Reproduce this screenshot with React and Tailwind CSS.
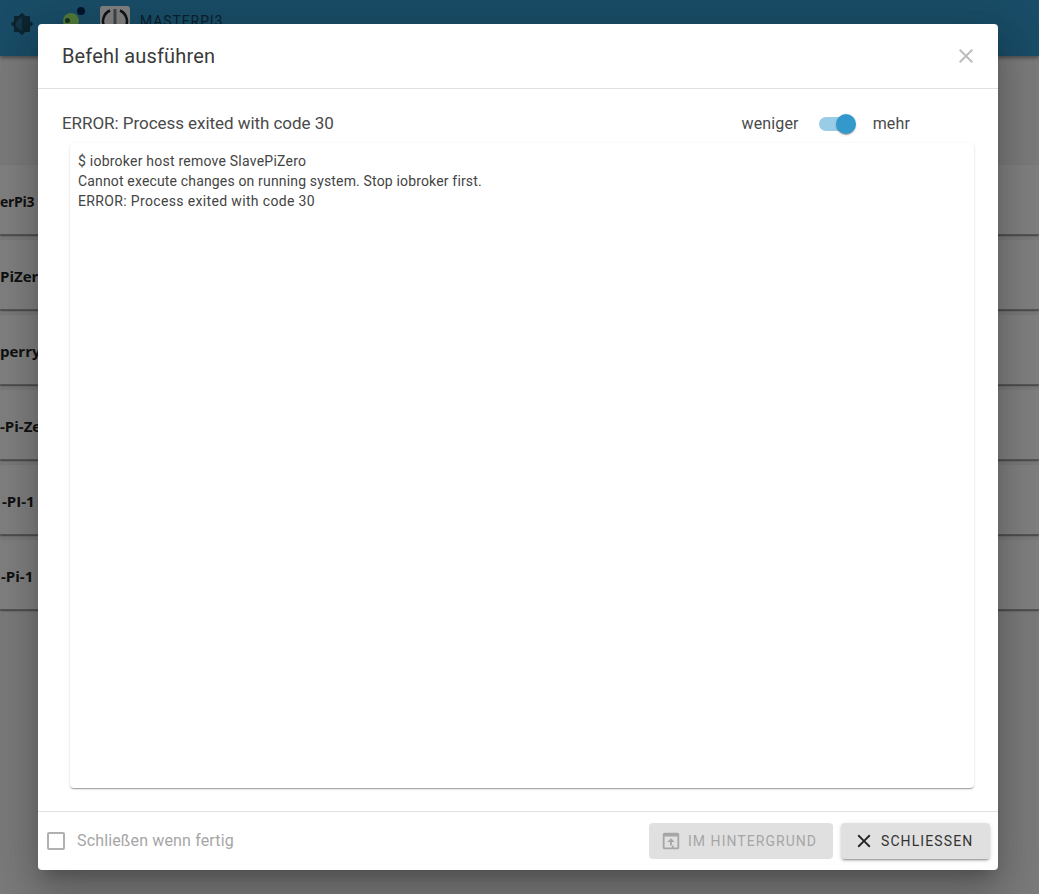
import React from "react";

const rows = [
  { text: "erPi3", cls: "ml-0 text-[14px] tracking-[-0.3px]" },
  { text: "PiZer", cls: "ml-0 text-[15px]" },
  { text: "perry_", cls: "ml-0 text-[15px]" },
  { text: "-Pi-Ze", cls: "ml-0 text-[15px]" },
  { text: "-PI-1", cls: "ml-[2px] text-[15px]" },
  { text: "-Pi-1", cls: "ml-[1px] text-[15px]" },
];
const font = "font-['Roboto','Liberation_Sans',sans-serif]";

export default function App() {
  return (
    <div className={`relative h-screen overflow-hidden bg-[#f5f5f5] ${font}`}>
      <header className="flex h-14 items-start bg-[#3399cc] shadow-[0_2px_4px_rgba(0,0,0,0.4)]">
        <svg className="mt-3 ml-[10px] h-6 w-6 -scale-x-100" viewBox="0 0 24 24" fill="#1a4a60">
          <circle cx="12" cy="12" r="6.5" fill="#2a6a8a" />
          <path d="M20 15.31 23.31 12 20 8.69V4h-4.69L12 .69 8.69 4H4v4.69L.69 12 4 15.31V20h4.69L12 23.31 15.31 20H20v-4.69zM12 18V6c3.31 0 6 2.69 6 6s-2.69 6-6 6z" />
        </svg>
        <div className="relative ml-[26px] h-6 w-6">
          <span className="absolute left-[3px] top-[13px] h-4 w-4 rounded-full bg-[#a0f070]" />
          <span className="absolute left-[5px] top-[18px] h-[5px] w-[5px] rounded-full bg-[#2a6040]" />
          <span className="absolute left-[17px] top-[7px] h-2 w-2 rounded-full bg-[#0b2a55]" />
        </div>
        <div className="mt-[6px] ml-[16px] flex h-[30px] w-[30px] items-center justify-center rounded-[3px] bg-white">
          <svg className="h-[28px] w-[28px]" viewBox="0 0 28 28" fill="none" stroke="#1a2a33" strokeWidth="2.5">
            <path d="M9 3.5a12 12 0 1 0 10 0" />
            <path d="M14 2v20" stroke="#7a8a90" strokeWidth="3" />
          </svg>
        </div>
        <span className="mt-[11px] ml-[10px] text-sm tracking-[0.9px] text-[#163f58]">MASTERPI3</span>
      </header>
      <div className="pt-[109px]">
        {rows.map((r) => (
          <div key={r.text} className="mb-[5px] flex h-[70px] items-center border-b border-[#aaa] bg-white pt-1 shadow-[0_2px_1px_-1px_rgba(0,0,0,0.2),0_1px_1px_0_rgba(0,0,0,0.14),0_1px_3px_0_rgba(0,0,0,0.12)]">
            <span className={`font-['Open_Sans',sans-serif] font-bold whitespace-nowrap text-[#222] ${r.cls}`}>{r.text}</span>
          </div>
        ))}
      </div>
      <div className="absolute inset-0 bg-black/50" />
      <div className="absolute left-[38px] top-6 flex h-[846px] w-[960px] flex-col rounded bg-white shadow-[0_11px_15px_-7px_rgba(0,0,0,0.2),0_24px_38px_3px_rgba(0,0,0,0.14),0_9px_46px_8px_rgba(0,0,0,0.12)]">
        <div className="flex h-[65px] shrink-0 items-center justify-between border-b border-[#e0e0e0] pl-6 pr-5">
          <h2 className="text-xl leading-8 font-normal tracking-[0.15px] text-[#3a3a3a]">Befehl ausführen</h2>
          <svg className="h-6 w-6" viewBox="0 0 24 24" fill="#bdbdbd">
            <path d="M19 6.41 17.59 5 12 10.59 6.41 5 5 6.41 10.59 12 5 17.59 6.41 19 12 13.41 17.59 19 19 17.59 13.41 12z" />
          </svg>
        </div>
        <div className="flex min-h-0 flex-1 flex-col pl-6 pr-6">
          <div className="flex h-[54px] shrink-0 items-center justify-between pt-4">
            <span className="text-[17px] tracking-[-0.05px] text-[#4a4a4a]">ERROR: Process exited with code 30</span>
            <div className="mr-[64px] flex items-center text-base tracking-[0.15px] text-[#4a4a4a]">
              <span>weniger</span>
              <div className="relative mx-5 h-[14px] w-[34px] rounded-full bg-[#99cce6]">
                <span className="absolute -top-[3px] right-[-3px] h-5 w-5 rounded-full bg-[#3399cc] shadow-[0_2px_1px_-1px_rgba(0,0,0,0.2),0_1px_1px_0_rgba(0,0,0,0.14),0_1px_3px_0_rgba(0,0,0,0.12)]" />
              </div>
              <span>mehr</span>
            </div>
          </div>
          <div className="mb-[23px] ml-2 flex-1 rounded bg-white px-2 py-2 text-sm leading-5 text-[#444] shadow-[0_2px_1px_-1px_rgba(0,0,0,0.2),0_1px_1px_0_rgba(0,0,0,0.14),0_1px_3px_0_rgba(0,0,0,0.12)]">
            <div className="tracking-[0.23px]">$ iobroker host remove SlavePiZero</div>
            <div className="tracking-[0.16px]">Cannot execute changes on running system. Stop iobroker first.</div>
            <div className="tracking-[0.35px]">ERROR: Process exited with code 30</div>
          </div>
        </div>
        <div className="flex h-[59px] shrink-0 items-center justify-between border-t border-[#e0e0e0] pl-[9px] pr-2">
          <label className="flex items-center gap-3 text-base tracking-[0.15px] text-[#a6a6a6]">
            <span className="h-[18px] w-[18px] rounded-[2px] border-2 border-[#b0b0b0]" />
            Schließen wenn fertig
          </label>
          <div className="flex gap-2">
            <button className="flex h-9 w-[184px] items-center gap-[6px] rounded bg-[#e0e0e0] pl-[11px] text-sm tracking-[1.04px] whitespace-nowrap text-[#a6a6a6]">
              <svg className="h-[22px] w-[22px]" viewBox="0 0 24 24" fill="#a6a6a6">
                <path d="M19 3H5a2 2 0 0 0-2 2v14a2 2 0 0 0 2 2h14a2 2 0 0 0 2-2V5a2 2 0 0 0-2-2zm0 16h-4v-2h-2v2H5V7h14v12zM12 9l-4 4h3v4h2v-4h3l-4-4z" />
              </svg>
              IM HINTERGRUND
            </button>
            <button className="flex h-9 w-[149px] items-center gap-[6px] rounded bg-[#e0e0e0] pl-3 text-sm tracking-[1.1px] whitespace-nowrap text-[#333] shadow-[0_3px_1px_-2px_rgba(0,0,0,0.2),0_2px_2px_0_rgba(0,0,0,0.14),0_1px_5px_0_rgba(0,0,0,0.12)]">
              <svg className="h-[22px] w-[22px]" viewBox="0 0 24 24" fill="#222">
                <path d="M19 6.41 17.59 5 12 10.59 6.41 5 5 6.41 10.59 12 5 17.59 6.41 19 12 13.41 17.59 19 19 17.59 13.41 12z" />
              </svg>
              SCHLIESSEN
            </button>
          </div>
        </div>
      </div>
    </div>
  );
}
